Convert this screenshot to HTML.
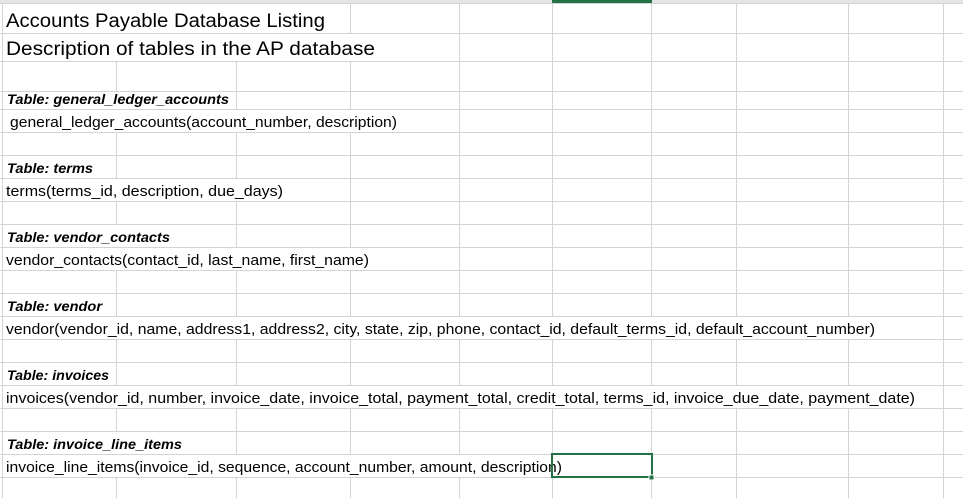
<!DOCTYPE html>
<html><head><meta charset="utf-8"><style>
html,body{margin:0;padding:0;background:#fff;width:963px;height:498px;overflow:hidden}
svg{display:block}
text{font-family:"Liberation Sans",sans-serif;fill:#000}
.b{font-weight:bold;font-style:italic;font-size:14px}
.n{font-size:14.5px}
.t{font-size:19px}
</style></head><body>
<svg width="963" height="498" viewBox="0 0 963 498">
<rect x="0" y="0" width="963" height="3" fill="#e4e4e4"/>
<rect x="552" y="0" width="100" height="3" fill="#217346"/>
<g stroke="#d4d4d4" stroke-width="1">
<line x1="2.5" y1="3" x2="2.5" y2="498"/>
<line x1="116.5" y1="3" x2="116.5" y2="498"/>
<line x1="236.5" y1="3" x2="236.5" y2="498"/>
<line x1="350.5" y1="3" x2="350.5" y2="498"/>
<line x1="459.5" y1="3" x2="459.5" y2="498"/>
<line x1="552.5" y1="3" x2="552.5" y2="498"/>
<line x1="651.5" y1="3" x2="651.5" y2="498"/>
<line x1="736.5" y1="3" x2="736.5" y2="498"/>
<line x1="848.5" y1="3" x2="848.5" y2="498"/>
<line x1="943.5" y1="3" x2="943.5" y2="498"/>
<line x1="0" y1="3.5" x2="963" y2="3.5"/>
<line x1="0" y1="33.5" x2="963" y2="33.5"/>
<line x1="0" y1="61.5" x2="963" y2="61.5"/>
<line x1="0" y1="91.5" x2="963" y2="91.5"/>
<line x1="0" y1="109.5" x2="963" y2="109.5"/>
<line x1="0" y1="132.5" x2="963" y2="132.5"/>
<line x1="0" y1="155.5" x2="963" y2="155.5"/>
<line x1="0" y1="178.5" x2="963" y2="178.5"/>
<line x1="0" y1="201.5" x2="963" y2="201.5"/>
<line x1="0" y1="224.5" x2="963" y2="224.5"/>
<line x1="0" y1="247.5" x2="963" y2="247.5"/>
<line x1="0" y1="270.5" x2="963" y2="270.5"/>
<line x1="0" y1="293.5" x2="963" y2="293.5"/>
<line x1="0" y1="316.5" x2="963" y2="316.5"/>
<line x1="0" y1="339.5" x2="963" y2="339.5"/>
<line x1="0" y1="362.5" x2="963" y2="362.5"/>
<line x1="0" y1="385.5" x2="963" y2="385.5"/>
<line x1="0" y1="408.5" x2="963" y2="408.5"/>
<line x1="0" y1="431.5" x2="963" y2="431.5"/>
<line x1="0" y1="454.5" x2="963" y2="454.5"/>
<line x1="0" y1="477.5" x2="963" y2="477.5"/>
</g>
<!-- white backgrounds behind overflowing text -->
<rect x="3" y="4" width="347" height="29" fill="#fff"/>
<rect x="3" y="34" width="456" height="27" fill="#fff"/>
<rect x="3" y="92" width="233" height="17" fill="#fff"/>
<rect x="3" y="110" width="397" height="22" fill="#fff"/>
<rect x="3" y="156" width="113" height="22" fill="#fff"/>
<rect x="3" y="179" width="290" height="22" fill="#fff"/>
<rect x="3" y="225" width="233" height="22" fill="#fff"/>
<rect x="3" y="248" width="368" height="22" fill="#fff"/>
<rect x="3" y="294" width="113" height="22" fill="#fff"/>
<rect x="3" y="317" width="878" height="22" fill="#fff"/>
<rect x="3" y="363" width="113" height="22" fill="#fff"/>
<rect x="3" y="386" width="918" height="22" fill="#fff"/>
<rect x="3" y="432" width="233" height="22" fill="#fff"/>
<rect x="3" y="455" width="548" height="22" fill="#fff"/>
<text class="t" x="6" y="27" textLength="319" lengthAdjust="spacingAndGlyphs">Accounts Payable Database Listing</text>
<text class="t" x="6" y="55" textLength="369" lengthAdjust="spacingAndGlyphs">Description of tables in the AP database</text>
<text class="b" x="7" y="104" textLength="222" lengthAdjust="spacingAndGlyphs">Table: general_ledger_accounts</text>
<text class="n" x="10" y="127" textLength="387" lengthAdjust="spacingAndGlyphs">general_ledger_accounts(account_number, description)</text>
<text class="b" x="7" y="173" textLength="86" lengthAdjust="spacingAndGlyphs">Table: terms</text>
<text class="n" x="6" y="196" textLength="277" lengthAdjust="spacingAndGlyphs">terms(terms_id,  description, due_days)</text>
<text class="b" x="7" y="242" textLength="163" lengthAdjust="spacingAndGlyphs">Table: vendor_contacts</text>
<text class="n" x="6" y="265" textLength="363" lengthAdjust="spacingAndGlyphs">vendor_contacts(contact_id, last_name, first_name)</text>
<text class="b" x="7" y="311" textLength="95" lengthAdjust="spacingAndGlyphs">Table: vendor</text>
<text class="n" x="6" y="334" textLength="869" lengthAdjust="spacingAndGlyphs">vendor(vendor_id, name, address1, address2, city, state, zip, phone,  contact_id, default_terms_id, default_account_number)</text>
<text class="b" x="7" y="380" textLength="102" lengthAdjust="spacingAndGlyphs">Table: invoices</text>
<text class="n" x="6" y="403" textLength="909" lengthAdjust="spacingAndGlyphs">invoices(vendor_id, number, invoice_date, invoice_total,  payment_total, credit_total, terms_id,  invoice_due_date, payment_date)</text>
<text class="b" x="7" y="449" textLength="175" lengthAdjust="spacingAndGlyphs">Table: invoice_line_items</text>
<text class="n" x="6" y="472" textLength="556" lengthAdjust="spacingAndGlyphs">invoice_line_items(invoice_id, sequence, account_number, amount, description)</text>
<rect x="552" y="454" width="100" height="23" fill="none" stroke="#217346" stroke-width="2"/>
<rect x="649" y="475" width="5" height="5" fill="#217346" stroke="#fff" stroke-width="1"/>
</svg>
</body></html>
